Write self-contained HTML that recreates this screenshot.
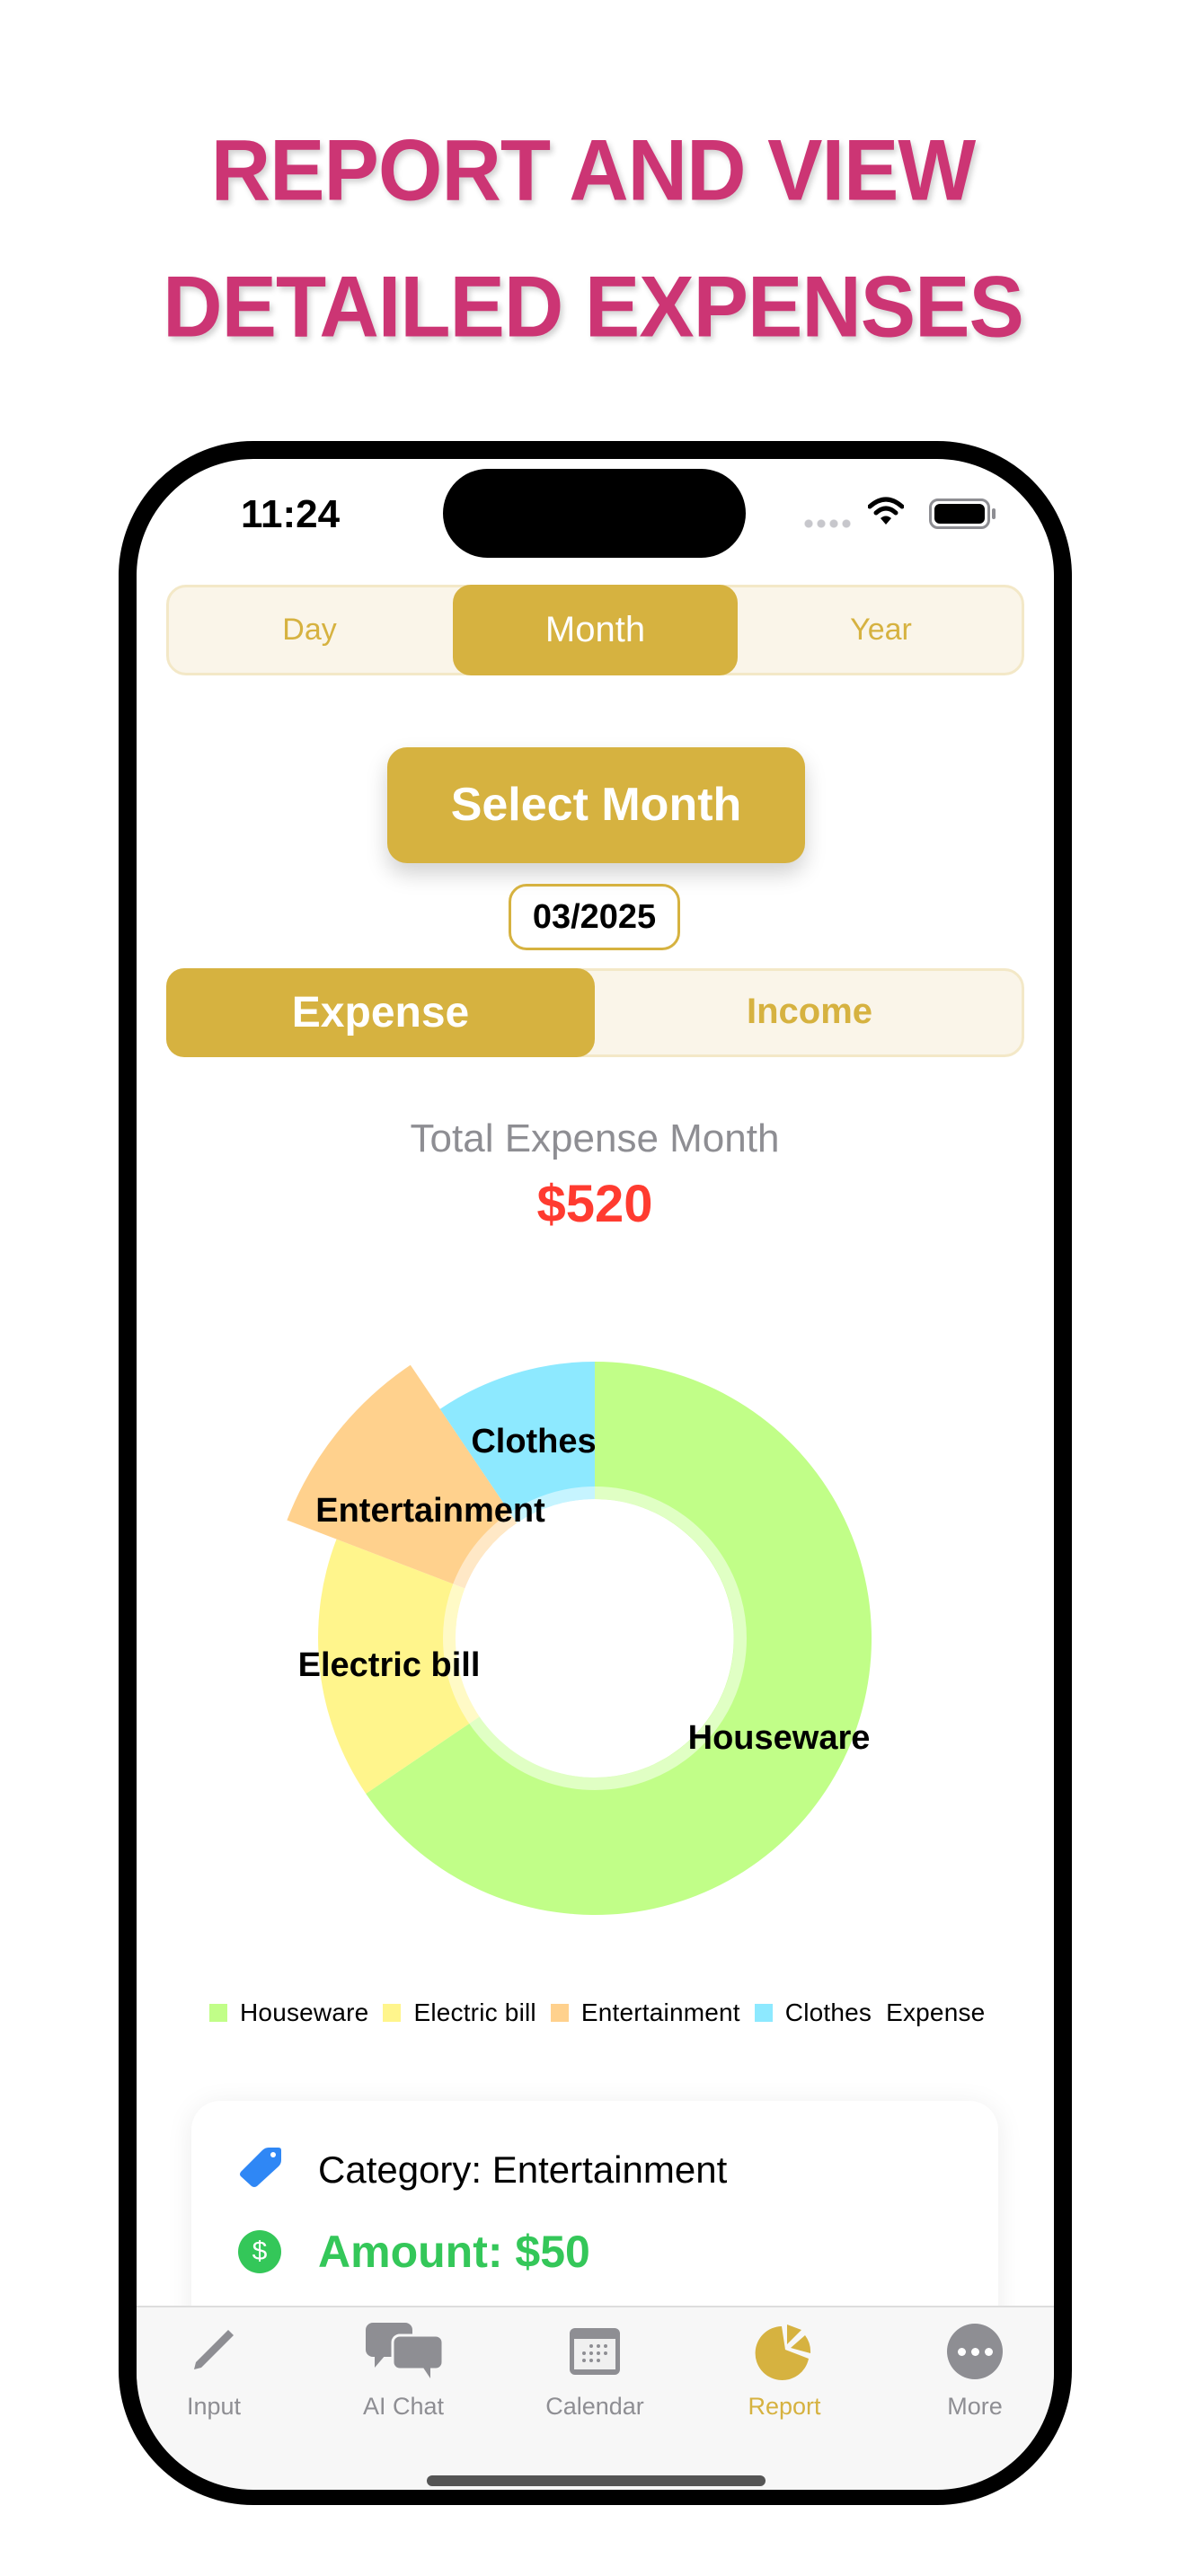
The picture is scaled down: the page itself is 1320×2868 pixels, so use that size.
<!DOCTYPE html>
<html><head><meta charset="utf-8"><style>
*{margin:0;padding:0;box-sizing:border-box}
body{width:1320px;height:2868px;background:#fff;font-family:"Liberation Sans",sans-serif;position:relative;overflow:hidden}
.abs{position:absolute}
.title{left:0;width:1320px;text-align:center;color:#cc3574;font-weight:900;font-size:92px;letter-spacing:-1px;text-shadow:3px 4px 6px rgba(0,0,0,.18);transform:scaleY(1.05)}
.phone{left:132px;top:491px;width:1061px;height:2298px;border:20px solid #000;border-radius:150px;background:#fff;overflow:hidden}
.c{text-align:center}
.seg{border:3px solid #f3e8c7;background:#faf5e9;border-radius:22px}
.sel{background:#d6b240;border-radius:20px;color:#fff}
.gold{color:#d6b240}
</style></head><body>
<div class="abs title" style="top:138px">REPORT AND VIEW</div>
<div class="abs title" style="top:290px">DETAILED EXPENSES</div>

<div class="abs phone"></div>
<div class="abs" style="left:268px;top:548px;font-size:44px;font-weight:600;color:#000">11:24</div>
<div class="abs" style="left:493px;top:522px;width:337px;height:99px;background:#000;border-radius:50px"></div>
<div class="abs" style="left:893px;top:578px;width:56px;height:10px;background:radial-gradient(circle,#c7c7cc 4px,transparent 5px) 0 0/14px 10px repeat-x"></div>
<svg class="abs" style="left:966px;top:552px" width="40" height="34" viewBox="0 0 40 34"><path d="M2 12 Q20 -4 38 12" stroke="#000" stroke-width="5" fill="none" stroke-linecap="round"/><path d="M9 19 Q20 9 31 19" stroke="#000" stroke-width="5" fill="none" stroke-linecap="round"/><path d="M14 25 L20 32 L26 25 Q20 20 14 25Z" fill="#000"/></svg>
<div class="abs" style="left:1034px;top:555px;width:68px;height:34px;border:3px solid #8e8e93;border-radius:10px;padding:3px"><div style="width:100%;height:100%;background:#000;border-radius:6px"></div></div>
<div class="abs" style="left:1104px;top:566px;width:4px;height:12px;background:#8e8e93;border-radius:2px"></div>

<div class="abs seg" style="left:185px;top:651px;width:955px;height:101px"></div>
<div class="abs gold c" style="left:185px;top:682px;width:319px;font-size:34px">Day</div>
<div class="abs sel c" style="left:504px;top:651px;width:317px;height:101px;font-size:40px;line-height:101px">Month</div>
<div class="abs gold c" style="left:821px;top:682px;width:319px;font-size:34px">Year</div>

<div class="abs c" style="left:431px;top:832px;width:465px;height:129px;background:#d6b240;border-radius:22px;color:#fff;font-size:52px;font-weight:700;line-height:129px;box-shadow:0 12px 24px rgba(0,0,0,.18)">Select Month</div>
<div class="abs c" style="left:566px;top:984px;width:191px;height:74px;border:3px solid #d6b240;border-radius:20px;font-size:38px;font-weight:700;line-height:68px">03/2025</div>

<div class="abs seg" style="left:185px;top:1078px;width:955px;height:99px"></div>
<div class="abs sel c" style="left:185px;top:1078px;width:477px;height:99px;font-size:48px;font-weight:700;line-height:99px">Expense</div>
<div class="abs gold c" style="left:662px;top:1104px;width:478px;font-size:40px;font-weight:700">Income</div>

<div class="abs c" style="left:0;width:1324px;top:1243px;font-size:44px;color:#8e8e93">Total Expense Month</div>
<div class="abs c" style="left:0;width:1324px;top:1307px;font-size:58px;color:#ff3b30;font-weight:700">$520</div>

<svg class="abs" style="left:0;top:0" width="1320" height="2868">
<g transform="translate(662,1824)">
<path d="M0 -308 A308 308 0 1 1 -254.8 173 L-128.4 87.2 A155 155 0 1 0 0 -155Z" fill="#c1fe88"/>
<path d="M-254.8 173 A308 308 0 0 1 -287.5 -110.4 L-144.7 -55.6 A155 155 0 0 0 -128.4 87.2Z" fill="#fff58c"/>
<path d="M-342.6 -131.5 A367 367 0 0 1 -205.2 -304.3 L-86.7 -128.5 A155 155 0 0 0 -144.7 -55.6Z" fill="#ffd18d"/>
<path d="M-172.2 -255.3 A308 308 0 0 1 0 -308 L0 -155 A155 155 0 0 0 -86.7 -128.5Z" fill="#8de9ff"/>
<circle r="162" fill="none" stroke="rgba(255,255,255,.5)" stroke-width="14"/>
</g>
<g font-family="Liberation Sans" font-weight="700" font-size="38" fill="#000" text-anchor="middle">
<text x="594" y="1617">Clothes</text>
<text x="479" y="1694">Entertainment</text>
<text x="433" y="1866">Electric bill</text>
<text x="867" y="1947">Houseware</text>
</g>
</svg>

<div class="abs" style="left:233px;top:2225px;font-size:28px;letter-spacing:0.2px;color:#000;white-space:nowrap;display:flex;align-items:center">
<span style="width:20px;height:20px;background:#c1fe88;margin-right:14px"></span>Houseware
<span style="width:20px;height:20px;background:#fff58c;margin:0 14px 0 16px"></span>Electric bill
<span style="width:20px;height:20px;background:#ffd18d;margin:0 14px 0 16px"></span>Entertainment
<span style="width:20px;height:20px;background:#8de9ff;margin:0 14px 0 16px"></span>Clothes&nbsp;&nbsp;Expense
</div>

<div class="abs" style="left:213px;top:2339px;width:898px;height:300px;background:#fff;border-radius:32px;box-shadow:0 4px 30px rgba(0,0,0,.08)"></div>
<svg class="abs" style="left:264px;top:2388px" width="52" height="48" viewBox="0 0 52 48"><path d="M4 30 L28 6 Q31 3 35 3 L46 3 Q49 3 49 6 L49 17 Q49 21 46 24 L22 46 Q19 48 16 46 L4 35 Q2 33 4 30Z" fill="#2f87f5"/><circle cx="40" cy="11" r="3" fill="#fff"/></svg>
<div class="abs" style="left:354px;top:2392px;font-size:42px;color:#000">Category: Entertainment</div>
<div class="abs c" style="left:265px;top:2483px;width:48px;height:48px;border-radius:50%;background:#34c759;color:#fff;font-size:30px;line-height:48px">$</div>
<div class="abs" style="left:354px;top:2478px;font-size:50px;color:#34c759;font-weight:700">Amount: $50</div>

<div class="abs" style="left:152px;top:2567px;width:1021px;height:205px;background:#f7f7f7;border-top:2px solid #ddd;border-radius:0 0 130px 130px"></div>
<svg class="abs" style="left:210px;top:2588px" width="56" height="56" viewBox="0 0 56 56"><path d="M6 50 L8 42 L44 6 L50 12 L14 48Z" fill="#8e8e93"/></svg>
<svg class="abs" style="left:405px;top:2584px" width="90" height="64" viewBox="0 0 90 64"><rect x="2" y="2" width="52" height="38" rx="8" fill="#8e8e93"/><path d="M12 38 L12 52 L24 38Z" fill="#8e8e93"/><rect x="32" y="16" width="56" height="38" rx="8" fill="#8e8e93" stroke="#f7f7f7" stroke-width="3"/><path d="M66 52 L74 64 L74 52Z" fill="#8e8e93"/></svg>
<svg class="abs" style="left:632px;top:2590px" width="60" height="56" viewBox="0 0 60 56"><rect x="2" y="2" width="56" height="52" rx="6" fill="#8e8e93"/><rect x="7" y="14" width="46" height="34" fill="#f0f0f0"/><g fill="#8e8e93"><circle cx="26" cy="22" r="2"/><circle cx="34" cy="22" r="2"/><circle cx="42" cy="22" r="2"/><circle cx="18" cy="30" r="2"/><circle cx="26" cy="30" r="2"/><circle cx="34" cy="30" r="2"/><circle cx="42" cy="30" r="2"/><circle cx="18" cy="38" r="2"/><circle cx="26" cy="38" r="2"/><circle cx="34" cy="38" r="2"/></g></svg>
<svg class="abs" style="left:840px;top:2586px" width="66" height="64" viewBox="0 0 66 64"><path d="M30 4 A30 30 0 1 0 60 40 L34 30Z" fill="#d6b240"/><path d="M36 2 L36 24 L52 8Z" fill="#d6b240"/><path d="M40 28 L56 14 A30 30 0 0 1 62 34Z" fill="#d6b240"/></svg>
<div class="abs" style="left:1054px;top:2587px;width:62px;height:62px;border-radius:50%;background:#8e8e93;display:flex;justify-content:center;align-items:center;gap:6px"><i style="width:9px;height:9px;border-radius:50%;background:#fff"></i><i style="width:9px;height:9px;border-radius:50%;background:#fff"></i><i style="width:9px;height:9px;border-radius:50%;background:#fff"></i></div>
<div class="abs c" style="left:168px;width:140px;top:2664px;font-size:27px;color:#8e8e93">Input</div>
<div class="abs c" style="left:379px;width:140px;top:2664px;font-size:27px;color:#8e8e93">AI Chat</div>
<div class="abs c" style="left:582px;width:160px;top:2664px;font-size:27px;color:#8e8e93">Calendar</div>
<div class="abs c" style="left:803px;width:140px;top:2664px;font-size:27px;color:#d6b240">Report</div>
<div class="abs c" style="left:1015px;width:140px;top:2664px;font-size:27px;color:#8e8e93">More</div>
<div class="abs" style="left:475px;top:2756px;width:377px;height:12px;background:#555;border-radius:6px"></div>
</body></html>
